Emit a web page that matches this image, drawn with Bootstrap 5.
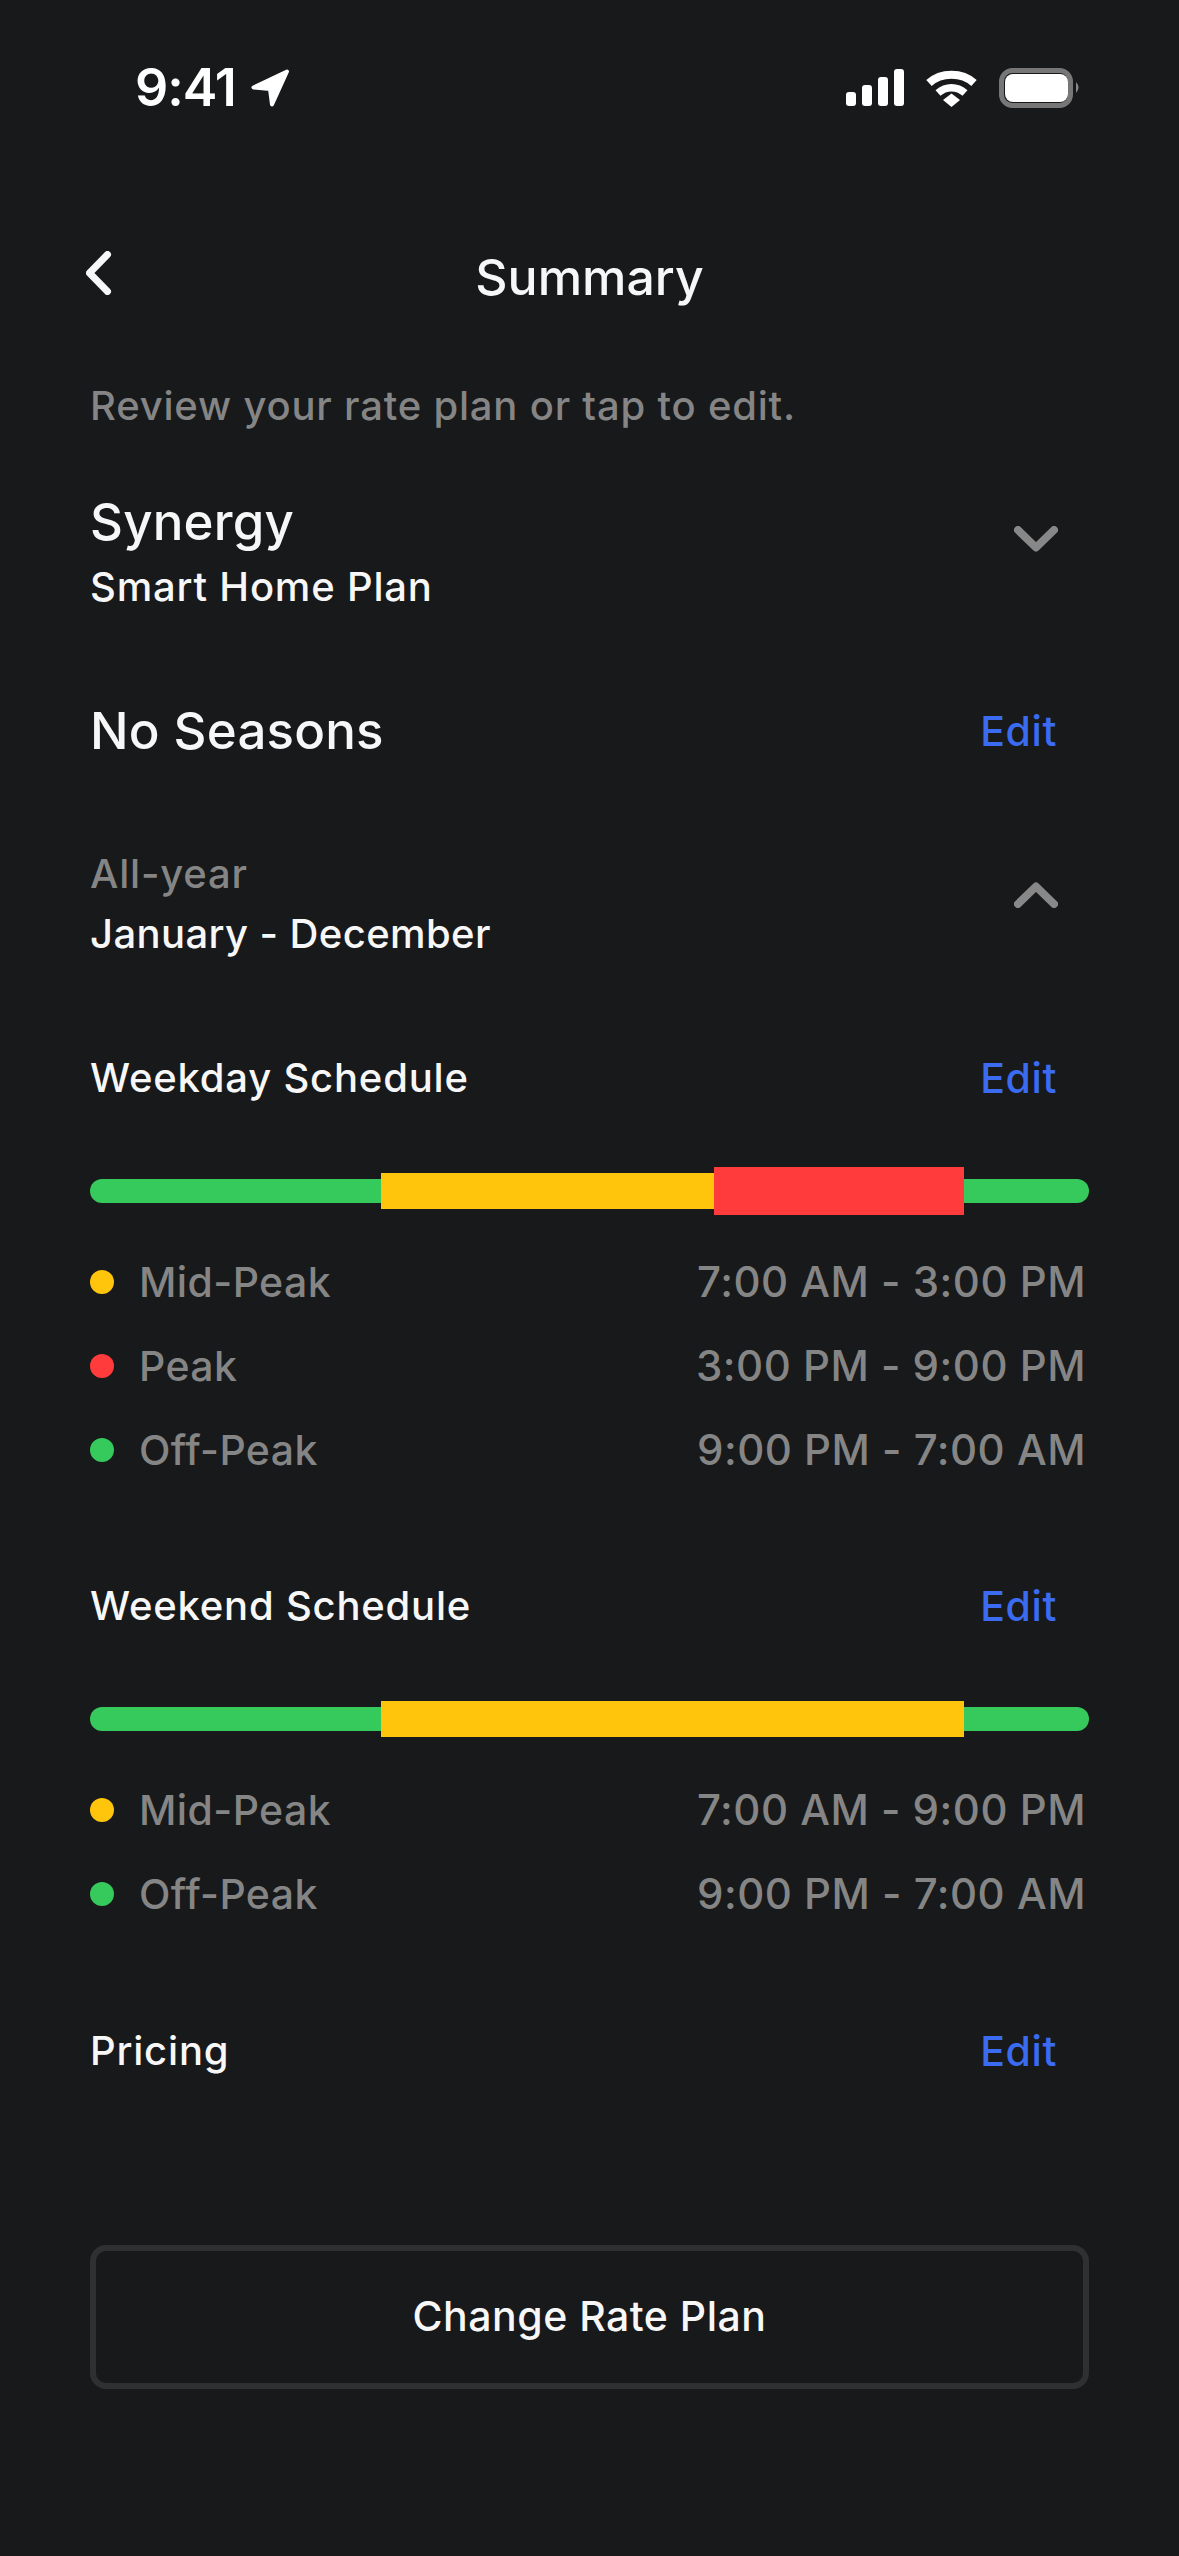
<!DOCTYPE html>
<html lang="en">
<head>
<meta charset="UTF-8">
<meta name="viewport" content="width=device-width, initial-scale=1.0">
<title>Summary</title>
<link href="https://cdn.jsdelivr.net/npm/bootstrap@5.3.3/dist/css/bootstrap.min.css" rel="stylesheet">
<style>
  html, body { background: #17191b; }
  body { font-family: "Inter", "Liberation Sans", sans-serif; color: #f7f7f7; width: 1179px; height: 2556px; overflow: hidden; }
  .status-row { height: 39px; margin-top: 68px; padding-left: 135px; padding-right: 98px; }
  .clock { font-size: 52px; font-weight: 600; line-height: 39px; letter-spacing: -1px; color: #fff; }
  .arrow-icon { margin-left: 15px; }
  .stat-gap { margin-left: 22px; }
  .page { padding: 0 90px; }
  .top-nav { height: 60px; margin-top: 140px; position: relative; }
  .top-nav h1 { font-size: 50px; font-weight: 550; line-height: 60px; margin: 0; }
  .back-link { position: absolute; left: -4px; top: 4px; }
  .back-link svg { display: block; }
  .muted-line { color: #858585; font-size: 40px; font-weight: 550; line-height: 46px; letter-spacing: .8px; }
  .intro { margin-top: 76px; }
  .big-title { font-size: 51px; font-weight: 550; line-height: 60px; letter-spacing: .2px; }
  .sub-title { font-size: 40px; font-weight: 550; line-height: 46px; letter-spacing: .8px; }
  .plan-sub { margin-top: 12px; }
  .year-sub { margin-top: 14px; letter-spacing: .4px; }
  .edit-link { color: #3b6bf0; font-size: 41px; font-weight: 550; line-height: 46px; text-decoration: none; margin-right: 32px; letter-spacing: .6px; }
  .chevron { margin-right: 31px; align-self: flex-start; }
  .chevron-down { margin-top: 34px; }
  .chevron-up { margin-top: 31px; }
  .plan-block { margin-top: 63px; }
  .seasons-block { margin-top: 91px; }
  .year-block { margin-top: 90px; }
  .sched-head { margin-top: 110px; }
  .sched-head.first-head { margin-top: 98px; }
  .pricing-head { margin-top: 111px; }
  .rate-bar { height: 48px; margin-top: 66px; }
  .seg { flex: 0 0 auto; }
  .seg-off { height: 24px; background: #36c95c; }
  .seg-off:first-child { border-radius: 12px 0 0 12px; }
  .seg-off:last-child { border-radius: 0 12px 12px 0; }
  .seg-mid { height: 36px; background: #ffc40c; }
  .seg-peak { height: 48px; background: #ff3b3b; }
  .legend { margin-top: 44px; }
  .legend-row { height: 46px; margin-bottom: 38px; color: #858585; font-size: 41px; font-weight: 550; line-height: 46px; letter-spacing: .4px; padding-right: 3px; }
  .legend-row:last-child { margin-bottom: 0; }
  .legend-time { font-size: 42px; letter-spacing: .5px; }
  .dot { width: 24px; height: 24px; border-radius: 50%; margin-right: 25px; }
  .dot-mid { background: #ffc40c; }
  .dot-peak { background: #ff3b3b; }
  .dot-off { background: #36c95c; }
  .rate-btn { display: block; width: 100%; height: 144px; margin-top: 171px; border: 6px solid #2e3031; border-radius: 16px; background: transparent; color: #f7f7f7; font-size: 41px; font-weight: 550; letter-spacing: .5px; padding: 0; }
  .rate-btn:hover { background: transparent; color: #f7f7f7; border-color: #2e3031; }
</style>
</head>
<body>
  <div class="status-row d-flex justify-content-between align-items-center">
    <div class="d-flex align-items-center">
      <span class="clock">9:41</span>
      <svg class="arrow-icon" width="39" height="38" viewBox="0 0 39 38"><path d="M36 2.500 L2.500 18.500 L19 20 L21 35.500 Z" fill="#fff" stroke="#fff" stroke-width="4" stroke-linejoin="round"/></svg>
    </div>
    <div class="d-flex align-items-center">
      <svg width="58" height="38" viewBox="0 0 58 38" fill="#fff"><rect x="0" y="23" width="10" height="14" rx="3"/><rect x="16" y="16" width="10" height="21" rx="3"/><rect x="32" y="8" width="10" height="29" rx="3"/><rect x="48" y="0" width="10" height="37" rx="3"/></svg>
      <svg class="stat-gap" width="51" height="38" viewBox="0 0 51 38" fill="none" stroke="#fff"><path d="M3 14 C15 3 36 3 48 14" stroke-width="8"/><path d="M12 24 C20 17 31 17 39 24" stroke-width="7.5"/><path d="M17 31 L25.5 24.5 L34 31 L25.500 38 Z" fill="#fff" stroke="none"/></svg>
      <svg class="stat-gap" width="82" height="40" viewBox="0 0 82 40"><rect x="2.500" y="2.500" width="69" height="35" rx="11" fill="none" stroke="#777" stroke-width="5"/><rect x="6" y="6" width="63" height="28" rx="8" fill="#fff"/><path d="M77 14 Q82 19.500 77 25 Z" fill="#888"/></svg>
    </div>
  </div>

  <div class="page">
    <div class="top-nav text-center">
      <a href="#" class="back-link"><svg width="26" height="44" viewBox="0 0 26 44" fill="none" stroke="#f7f7f7" stroke-width="7" stroke-linecap="round" stroke-linejoin="round"><path d="M21.500 3.500 L3.500 22 L21.500 40.500"/></svg></a>
      <h1>Summary</h1>
    </div>
    <div class="muted-line intro">Review your rate plan or tap to edit.</div>

    <div class="plan-block d-flex justify-content-between align-items-center">
      <div>
        <div class="big-title">Synergy</div>
        <div class="sub-title plan-sub">Smart Home Plan</div>
      </div>
      <svg class="chevron chevron-down" width="44" height="26" viewBox="0 0 44 26" fill="none" stroke="#888" stroke-width="8" stroke-linecap="round" stroke-linejoin="round"><path d="M4 4 L22 21.500 L40 4"/></svg>
    </div>

    <div class="seasons-block d-flex justify-content-between align-items-center">
      <div class="big-title">No Seasons</div>
      <a href="#" class="edit-link">Edit</a>
    </div>

    <div class="year-block d-flex justify-content-between align-items-center">
      <div>
        <div class="muted-line">All-year</div>
        <div class="sub-title year-sub">January - December</div>
      </div>
      <svg class="chevron chevron-up" width="44" height="26" viewBox="0 0 44 26" fill="none" stroke="#888" stroke-width="8" stroke-linecap="round" stroke-linejoin="round"><path d="M4 22 L22 4.500 L40 22"/></svg>
    </div>

    <div class="sched-head first-head d-flex justify-content-between align-items-center">
      <div class="sub-title">Weekday Schedule</div>
      <a href="#" class="edit-link">Edit</a>
    </div>
    <div class="rate-bar d-flex align-items-center" id="weekdayBar"></div>
    <div class="legend" id="weekdayLegend"></div>

    <div class="sched-head d-flex justify-content-between align-items-center">
      <div class="sub-title">Weekend Schedule</div>
      <a href="#" class="edit-link">Edit</a>
    </div>
    <div class="rate-bar d-flex align-items-center" id="weekendBar"></div>
    <div class="legend" id="weekendLegend"></div>

    <div class="pricing-head d-flex justify-content-between align-items-center">
      <div class="sub-title">Pricing</div>
      <a href="#" class="edit-link">Edit</a>
    </div>

    <button class="btn rate-btn">Change Rate Plan</button>
  </div>

  <script>
    const kinds = {
      mid: 'Mid-Peak',
      peak: 'Peak',
      off: 'Off-Peak'
    };

    function drawBar(id, segments) {
      let html = '';
      for (const s of segments) {
        html += `<div class="seg seg-${s[0]}" style="width: ${s[1] / 24 * 100}%"></div>`;
      }
      document.getElementById(id).innerHTML = html;
    }

    function drawLegend(id, rows) {
      let html = '';
      for (const r of rows) {
        html += `
          <div class="legend-row d-flex justify-content-between align-items-center">
            <div class="d-flex align-items-center"><span class="dot dot-${r[0]}"></span>${kinds[r[0]]}</div>
            <div class="legend-time">${r[1]}</div>
          </div>`;
      }
      document.getElementById(id).innerHTML = html;
    }

    drawBar('weekdayBar', [['off', 7], ['mid', 8], ['peak', 6], ['off', 3]]);
    drawLegend('weekdayLegend', [['mid', '7:00 AM - 3:00 PM'], ['peak', '3:00 PM - 9:00 PM'], ['off', '9:00 PM - 7:00 AM']]);
    drawBar('weekendBar', [['off', 7], ['mid', 14], ['off', 3]]);
    drawLegend('weekendLegend', [['mid', '7:00 AM - 9:00 PM'], ['off', '9:00 PM - 7:00 AM']]);
  </script>
</body>
</html>
